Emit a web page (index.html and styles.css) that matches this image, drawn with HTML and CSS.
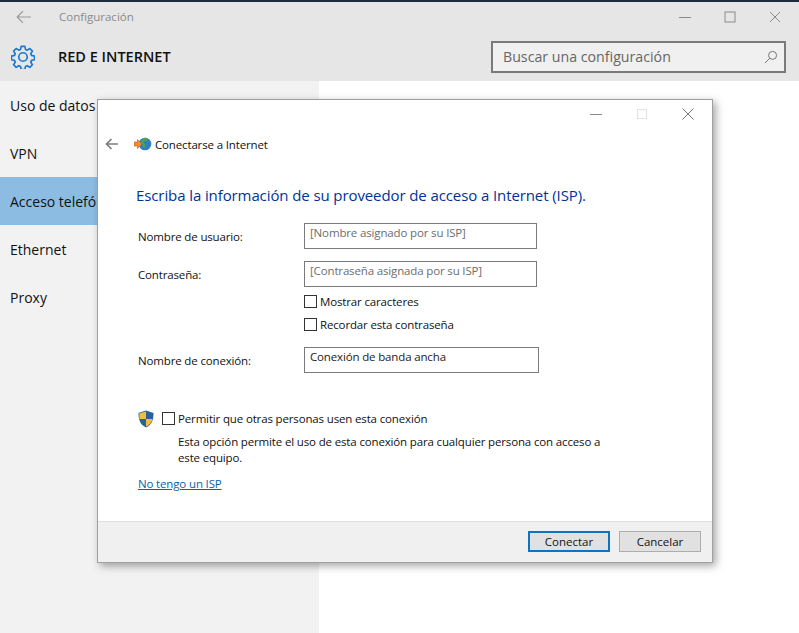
FILE: index.html
```html
<!DOCTYPE html>
<html lang="es">
<head>
<meta charset="UTF-8">
<title>Configuración</title>
<link rel="stylesheet" href="styles.css">
</head>
<body>
<div class="settings">
  <div class="titlebar">
    <svg class="back-icon" width="16" height="14" viewBox="0 0 16 14"><path d="M15 7H1.5M7 1.2 1.2 7 7 12.8" fill="none" stroke="#9a9a9a" stroke-width="1.2"/></svg>
    <span class="app-title">Configuración</span>
    <div class="win-buttons">
      <svg width="12" height="12" viewBox="0 0 12 12"><path d="M0 6.5h12" stroke="#8a8a8a"/></svg>
      <svg width="12" height="12" viewBox="0 0 12 12"><rect x="1" y="1" width="10" height="10" fill="none" stroke="#8a8a8a"/></svg>
      <svg width="12" height="12" viewBox="0 0 12 12"><path d="M1 1l10 10M11 1 1 11" stroke="#8a8a8a"/></svg>
    </div>
  </div>
  <div class="headerbar">
    <svg class="gear" width="24" height="24" viewBox="0 0 26 26"><path d="M11 1.500h4l.7 3.300 1.900.8 2.800-1.800 2.800 2.800-1.800 2.800.8 1.900 3.300.7v4l-3.300.7-.8 1.900 1.800 2.800-2.800 2.800-2.800-1.800-1.900.8-.7 3.300h-4l-.7-3.300-1.900-.8-2.800 1.800-2.800-2.800 1.800-2.800-.8-1.900-3.300-.7v-4l3.300-.7.8-1.900-1.800-2.800 2.800-2.800 2.800 1.800 1.900-.8z" fill="none" stroke="#1a78d0" stroke-width="1.800" stroke-linejoin="round"/><circle cx="13" cy="13" r="4.600" fill="none" stroke="#1a78d0" stroke-width="1.800"/></svg>
    <span class="section-title">RED E INTERNET</span>
    <div class="search">
      <span>Buscar una configuración</span>
      <svg width="14" height="14" viewBox="0 0 14 14"><circle cx="8.6" cy="5.4" r="4" fill="none" stroke="#777"/><path d="M5.8 8.2 1 13" stroke="#777"/></svg>
    </div>
  </div>
  <div class="body">
    <ul class="sidebar">
      <li>Uso de datos</li>
      <li>VPN</li>
      <li class="selected">Acceso telefónico</li>
      <li>Ethernet</li>
      <li>Proxy</li>
    </ul>
    <div class="content"></div>
  </div>
</div>

<div class="dialog">
  <div class="dialog-top">
    <svg width="12" height="12" viewBox="0 0 12 12"><path d="M0 6.5h12" stroke="#8a8a8a"/></svg>
    <svg width="12" height="12" viewBox="0 0 12 12"><rect x="1.5" y="1.5" width="9" height="9" fill="none" stroke="#e2e2e2"/></svg>
    <svg width="12" height="12" viewBox="0 0 12 12"><path d="M.5.5l11 11M11.5.5l-11 11" stroke="#777"/></svg>
  </div>
  <div class="dialog-nav">
    <svg class="dialog-back" width="14" height="12" viewBox="0 0 14 12"><path d="M13 6H2M6.5 1 1.5 6l5 5" fill="none" stroke="#7d7d7d" stroke-width="1.7"/></svg>
    <svg class="globe" width="18" height="16" viewBox="0 0 18 16">
      <circle cx="11" cy="8" r="6.300" fill="#2f7fc4"/>
      <path d="M9 2.300c2-1 4-.5 5 1l-1.500 2-2-.5-1 2 2 2-1 3.500-1.500-1-.5-3-2-1.500z" fill="#4fa548"/>
      <path d="M0 6h3.500V3.500L8 8l-4.500 4.500V10H0z" fill="#f08c30" stroke="#b8602a" stroke-width=".6"/>
    </svg>
    <span>Conectarse a Internet</span>
  </div>
  <div class="dialog-main">
    <h1>Escriba la información de su proveedor de acceso a Internet (ISP).</h1>
    <div class="form-row">
      <label>Nombre de usuario:</label>
      <div class="field placeholder">[Nombre asignado por su ISP]</div>
    </div>
    <div class="form-row row-password">
      <label>Contraseña:</label>
      <div class="field placeholder">[Contraseña asignada por su ISP]</div>
    </div>
    <div class="check-list">
      <div class="check"><span class="box"></span>Mostrar caracteres</div>
      <div class="check"><span class="box"></span>Recordar esta contraseña</div>
    </div>
    <div class="form-row row-name">
      <label>Nombre de conexión:</label>
      <div class="field field-wide">Conexión de banda ancha</div>
    </div>
    <div class="share">
      <svg class="shield" width="16" height="18" viewBox="0 0 16 18">
        <path d="M8 .5 15.500 3c0 7-1.500 11.500-7.500 14.500C2 14.500.5 10 .5 3z" fill="#2b5f9e"/>
        <path d="M8 1.500V9H1.500C1.300 7.500 1.300 5.500 1.300 3.600zM8 9h6.500c-.8 3.500-3 6-6.500 7.600z" fill="#f2bf35"/>
      </svg>
      <div class="check share-check"><span class="box"></span>Permitir que otras personas usen esta conexión</div>
    </div>
    <p class="share-note">Esta opción permite el uso de esta conexión para cualquier persona con acceso a este equipo.</p>
    <a class="isp-link" href="#">No tengo un ISP</a>
  </div>
  <div class="dialog-footer">
    <button class="btn btn-default">Conectar</button>
    <button class="btn">Cancelar</button>
  </div>
</div>
</body>
</html>
```

FILE: styles.css
```css
* {
  box-sizing: border-box;
}
html, body {
  margin: 0;
  height: 633px;
  overflow: hidden;
}
body {
  font-family: "Open Sans", "Noto Sans", sans-serif;
  background-color: #fff;
  color: #111;
}
.settings {
  height: 633px;
  display: flex;
  flex-direction: column;
  border-top: 2px solid #1d2b3a;
}
.titlebar {
  height: 30px;
  background-color: #e6e6e6;
  display: flex;
  align-items: center;
  padding: 0 0 1px 16px;
}
.app-title {
  margin-left: 27px;
  font-size: 11.5px;
  color: #8b8b8b;
}
.win-buttons {
  margin-left: auto;
  display: flex;
  gap: 33px;
  padding-right: 18px;
}
.headerbar {
  height: 49px;
  background-color: #e6e6e6;
  display: flex;
  align-items: center;
  padding-left: 11px;
  position: relative;
}
.section-title {
  margin-left: 23px;
  font-size: 14.5px;
  font-weight: 600;
  color: #111;
}
.search {
  margin-left: auto;
  margin-right: 13px;
  width: 295px;
  height: 32px;
  border: 2px solid #7a7a7a;
  background-color: #f0f0f0;
  display: flex;
  align-items: center;
  justify-content: space-between;
  padding: 0 6px 0 10px;
  font-size: 14.2px;
  color: #666;
}
.body {
  flex: 1;
  display: flex;
}
.sidebar {
  list-style-type: none;
  margin: 0;
  padding: 0;
  width: 319px;
  background-color: #f2f2f2;
}
.sidebar li {
  height: 48px;
  line-height: 49px;
  padding-left: 10px;
  font-size: 14px;
}
.sidebar li.selected {
  background-color: #8dbce3;
}
.content {
  flex: 1;
}
.dialog {
  position: absolute;
  left: 97px;
  top: 99px;
  width: 616px;
  height: 464px;
  background-color: #fff;
  border: 1px solid #a0a0a0;
  box-shadow: 3px 3px 8px rgba(0, 0, 0, 0.35);
  display: flex;
  flex-direction: column;
  font-size: 11.5px;
  letter-spacing: -0.15px;
}
.dialog-top {
  height: 27px;
  display: flex;
  justify-content: flex-end;
  align-items: center;
  gap: 34px;
  padding-right: 18px;
}
.dialog-nav {
  height: 34px;
  display: flex;
  align-items: center;
  padding-left: 7px;
}
.dialog-back {
  margin-right: 15px;
}
.globe {
  margin-right: 3px;
}
.dialog-main {
  flex: 1;
  padding: 0 0 0 40px;
}
h1 {
  margin: 23px 0 17px -2px;
  font-size: 15px;
  line-height: 22px;
  font-weight: 400;
  color: #003399;
  letter-spacing: -0.1px;
}
.form-row {
  display: flex;
  align-items: center;
  height: 26px;
}
.form-row label {
  width: 166px;
}
.row-password {
  margin-top: 12px;
}
.field {
  width: 233px;
  height: 26px;
  border: 1px solid #7a7a7a;
  padding: 0 5px 6px;
  line-height: 18px;
}
.field-wide {
  width: 235px;
  color: #222;
}
.placeholder {
  color: #6d6d6d;
}
.check-list {
  margin: 3px 0 0 166px;
}
.check {
  display: flex;
  align-items: center;
  height: 23px;
}
.box {
  width: 13px;
  height: 13px;
  border: 1px solid #333;
  margin-right: 3px;
  background-color: #fff;
}
.row-name {
  margin-top: 11px;
}
.share {
  display: flex;
  align-items: center;
  margin-top: 34px;
}
.shield {
  margin-right: 8px;
}
.share-note {
  margin: 4px 0 0 40px;
  width: 440px;
  line-height: 16px;
}
.isp-link {
  display: inline-block;
  margin-top: 10px;
  color: #0a64ad;
}
.dialog-footer {
  height: 41px;
  background-color: #f0f0f0;
  border-top: 1px solid #dfdfdf;
  display: flex;
  justify-content: flex-end;
  align-items: center;
  gap: 9px;
  padding: 0 11px 2px 0;
}
.btn {
  width: 82px;
  height: 21px;
  background-color: #e1e1e1;
  border: 1px solid #adadad;
  font-family: inherit;
  font-size: 11.5px;
  color: #111;
  padding: 0;
}
.btn-default {
  border: 2px solid #0f73c0;
}
```
